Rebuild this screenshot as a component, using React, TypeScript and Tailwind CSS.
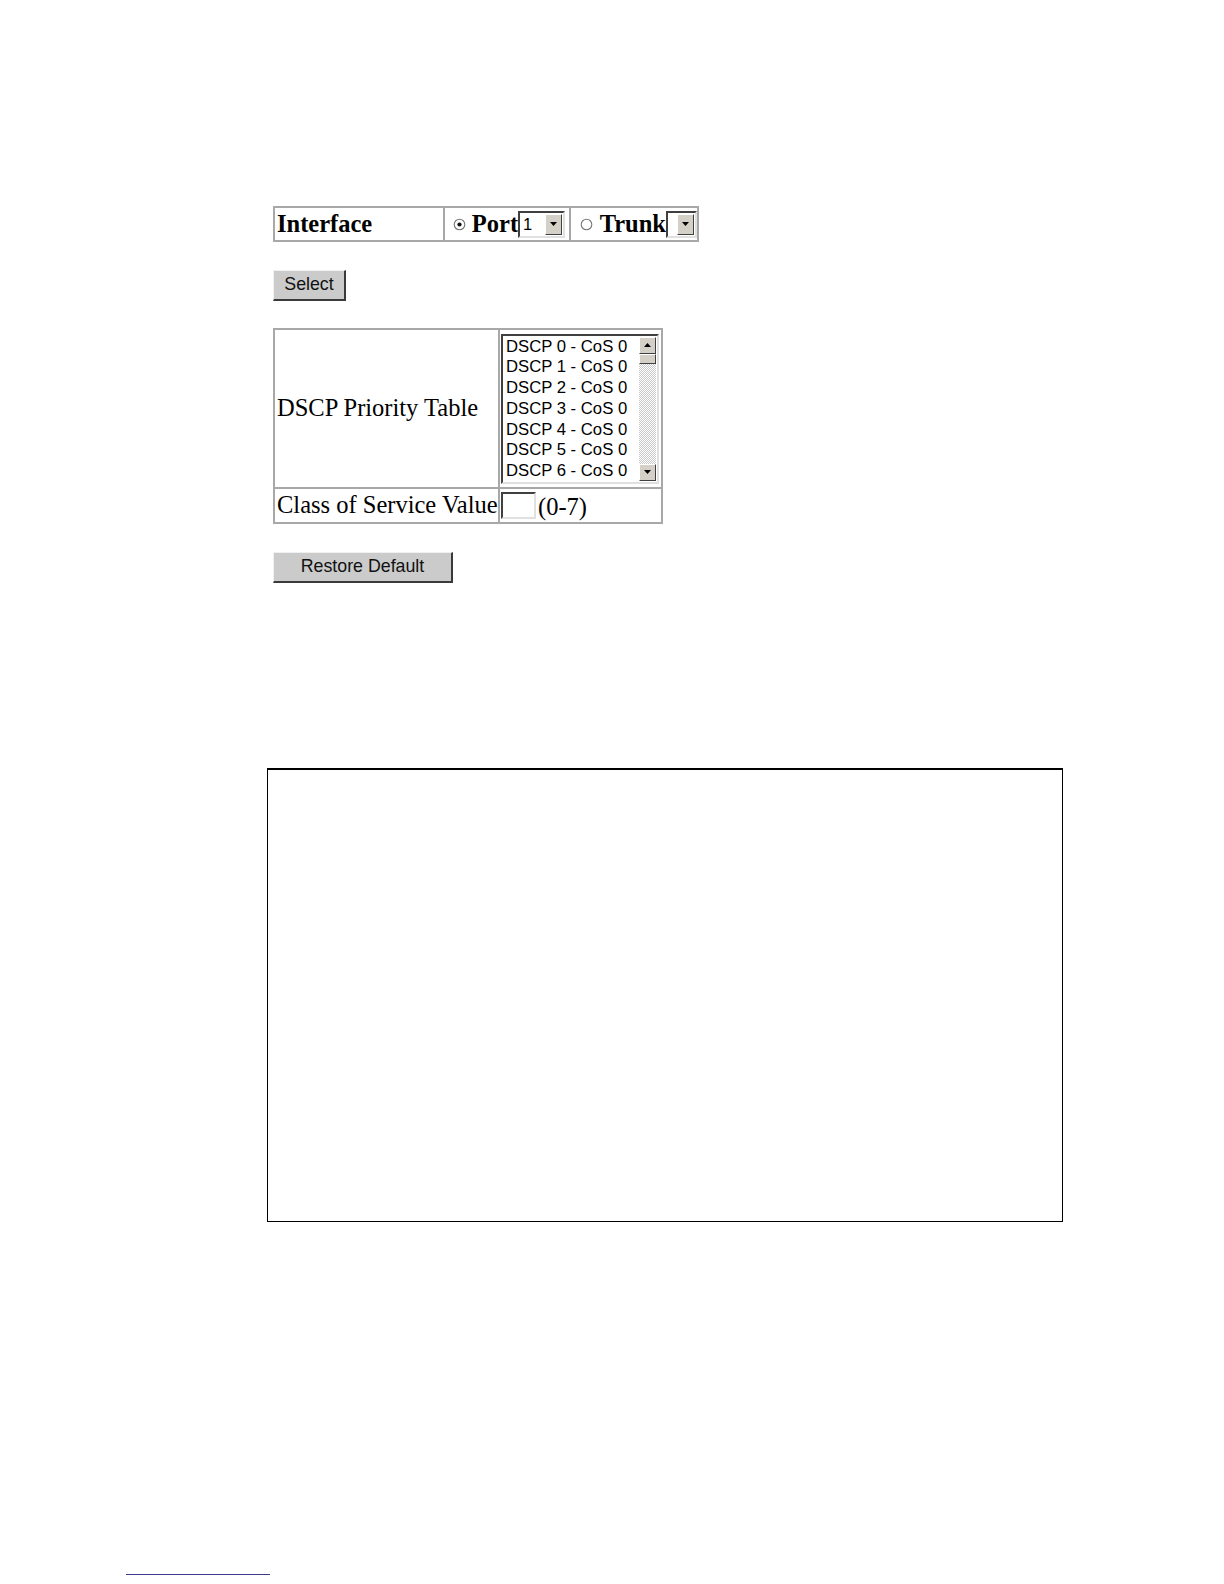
import type { ReactNode } from 'react';

const serif = "font-['Liberation_Serif',_'Times_New_Roman',_serif]";
const sans = "font-['Liberation_Sans',_Arial,_sans-serif]";

const dscpRows = [0, 1, 2, 3, 4, 5, 6];

function Radio({ checked }: { checked?: boolean }) {
  return (
    <svg width="13" height="13" viewBox="0 0 13 13" className="inline-block shrink-0">
      <circle cx="6.5" cy="6.5" r="5.3" fill="#fff" stroke="#777" strokeWidth="1.1" />
      {checked && <circle cx="6.5" cy="6.5" r="2.1" fill="#111" />}
    </svg>
  );
}

function ArrowBox({ dir }: { dir: 'up' | 'down' }) {
  return (
    <div className="w-[17px] h-[17px] bg-[#d4d0c8] border border-t-white border-l-white border-r-[#404040] border-b-[#404040] flex items-center justify-center">
      <svg width="7" height="4" viewBox="0 0 7 4">
        {dir === 'up' ? (
          <polygon points="3.5,0 7,4 0,4" fill="#000" />
        ) : (
          <polygon points="0,0 7,0 3.5,4" fill="#000" />
        )}
      </svg>
    </div>
  );
}

function DropSelect({ value, width }: { value: string; width: string }) {
  return (
    <div
      className={`${width} h-[27px] shrink-0 bg-white border-2 border-t-[#404040] border-l-[#404040] border-r-[#e0e0e0] border-b-[#e0e0e0] flex items-center justify-between pl-[3px] pr-[1px]`}
    >
      <span className={`${sans} text-[16.5px] leading-none text-black`}>{value}</span>
      <div className="w-[17px] h-[21px] bg-[#d4d0c8] border border-t-white border-l-white border-r-[#404040] border-b-[#404040] flex items-center justify-center">
        <svg width="7" height="4" viewBox="0 0 7 4">
          <polygon points="0,0 7,0 3.5,4" fill="#000" />
        </svg>
      </div>
    </div>
  );
}

function WinButton({ children, width }: { children: ReactNode; width: string }) {
  return (
    <button
      type="button"
      className={`${width} h-[31px] bg-[#cbcbcb] border border-t-[#f0f0f0] border-l-[#f0f0f0] border-r-2 border-b-2 border-r-[#3a3a3a] border-b-[#3a3a3a] ${sans} text-[17.8px] leading-none text-[#111] flex items-center justify-center`}
    >
      {children}
    </button>
  );
}

const bold24 = `${serif} font-bold text-[24.5px] leading-none text-black`;
const reg24 = `${serif} text-[24.5px] leading-none text-black`;

export default function App() {
  return (
    <div className="w-[1224px] h-[1584px] bg-white">
      <div className="pl-[273px] pt-[206px]">
        {/* Interface selector */}
        <div className="w-[426px] h-[36px] border-2 border-[#a8a8a8] flex">
          <div className={`w-[168px] flex items-center pl-[2px] ${bold24}`}>Interface</div>
          <div className="w-[126px] border-l-2 border-[#a8a8a8] flex items-center pl-[8px]">
            <Radio checked />
            <span className={`${bold24} ml-[6px]`}>Port</span>
            <DropSelect value="1" width="w-[47px]" />
          </div>
          <div className="flex-1 border-l-2 border-[#a8a8a8] flex items-center pl-[9px]">
            <Radio />
            <span className={`${bold24} ml-[7px]`}>Trunk</span>
            <DropSelect value="" width="w-[31px]" />
          </div>
        </div>

        <div className="mt-[28px]">
          <WinButton width="w-[73px]">Select</WinButton>
        </div>

        {/* DSCP priority table */}
        <div className="mt-[27px] w-[390px] h-[196px] border-2 border-[#a8a8a8] flex flex-col">
          <div className="h-[157px] flex">
            <div className={`w-[223px] flex items-center pl-[2px] ${reg24}`}>DSCP Priority Table</div>
            <div className="flex-1 border-l-2 border-[#a8a8a8] flex items-center pl-[1px]">
              <div className="w-[158px] h-[150px] bg-white border-2 border-t-[#404040] border-l-[#404040] border-r-[#e0e0e0] border-b-[#e0e0e0] flex">
                <div className={`flex-1 pl-[3px] pt-[1px] ${sans} text-[16.7px] leading-[20.8px] text-black`}>
                  {dscpRows.map((n) => (
                    <div key={n}>DSCP {n} - CoS 0</div>
                  ))}
                </div>
                <div className="w-[17px] flex flex-col bg-[repeating-conic-gradient(#c8c8c8_0%_25%,#ffffff_0%_50%)] bg-[length:2px_2px] mr-[1px] my-[1px]">
                  <ArrowBox dir="up" />
                  <div className="w-[17px] h-[10px] bg-[#d4d0c8] border border-t-white border-l-white border-r-[#404040] border-b-[#404040]" />
                  <div className="flex-1" />
                  <ArrowBox dir="down" />
                </div>
              </div>
            </div>
          </div>
          <div className="flex-1 border-t-2 border-[#a8a8a8] flex">
            <div className={`w-[223px] flex items-center pl-[2px] ${reg24}`}>Class of Service Value</div>
            <div className="flex-1 border-l-2 border-[#a8a8a8] flex items-center pl-[1px]">
              <div className="w-[35px] h-[27px] bg-white border-2 border-t-[#404040] border-l-[#404040] border-r-[#e0e0e0] border-b-[#e0e0e0]" />
              <span className={`${reg24} ml-[2px] mt-[4px]`}>(0-7)</span>
            </div>
          </div>
        </div>

        <div className="mt-[28px]">
          <WinButton width="w-[180px]">Restore Default</WinButton>
        </div>
      </div>

      <div className="ml-[267px] mt-[185px] w-[796px] h-[454px] border border-black border-t-2" />

      <div className="ml-[126px] mt-[352px] w-[144px] h-px bg-[#3c3c8c]" />
    </div>
  );
}
